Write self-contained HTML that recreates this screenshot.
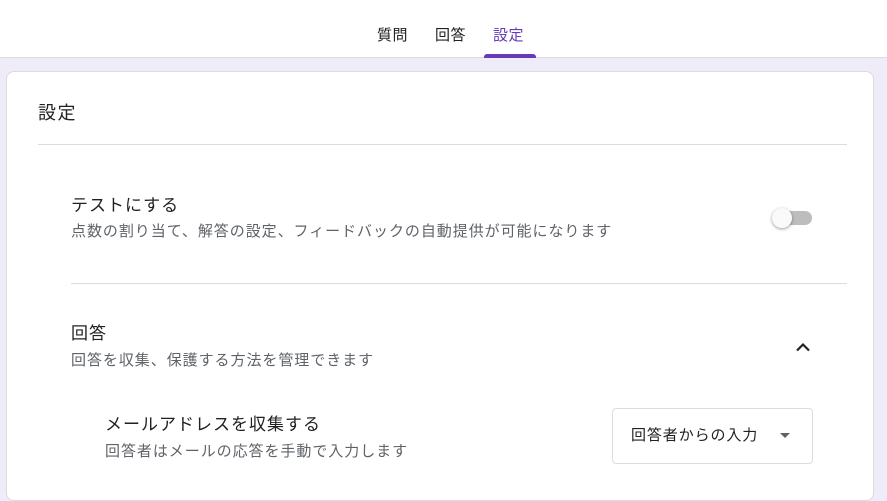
<!DOCTYPE html>
<html><head><meta charset="utf-8"><style>
*{margin:0;padding:0;box-sizing:border-box}
body{width:887px;height:482px;overflow:hidden;background:#f0ebf8;font-family:"Liberation Sans","Noto Sans CJK JP",sans-serif;position:relative;color:#202124}
.hdr{position:absolute;left:0;top:0;width:887px;height:58px;background:#fff;border-bottom:1px solid #dadce0}
.tab{position:absolute;top:26px;font-size:15px;line-height:20px;color:#202124;letter-spacing:0.5px}
.ul{position:absolute;left:484px;top:54px;width:52px;height:4px;background:#673ab7;border-radius:3px 3px 0 0}
.card{position:absolute;left:6px;top:71px;width:868px;height:430px;background:#fff;border:1px solid #dadce0;border-radius:8px}
.t{position:absolute;white-space:nowrap}
.s{font-size:15px;line-height:20px;color:#5f6368;letter-spacing:0.95px}
.h{font-size:17px;line-height:22px;letter-spacing:1px}
.line{position:absolute;height:1px;background:#dadce0}
</style></head><body>
<div class="hdr">
<div class="tab" style="left:377px">質問</div>
<div class="tab" style="left:435px">回答</div>
<div class="tab" style="left:493px;color:#673ab7">設定</div>
<div class="ul"></div>
</div>
<div class="card"></div>
<div class="t" style="left:38px;top:101px;font-size:18px;line-height:24px;letter-spacing:1.5px">設定</div>
<div class="line" style="left:38px;top:144px;width:809px"></div>
<div class="t h" style="left:71px;top:195px">テストにする</div>
<div class="t s" style="left:71px;top:222px">点数の割り当て、解答の設定、フィードバックの自動提供が可能になります</div>
<div style="position:absolute;left:776px;top:211px;width:36px;height:14px;border-radius:7px;background:#bdbdbd"></div>
<div style="position:absolute;left:772px;top:208px;width:20px;height:20px;border-radius:50%;background:#fafafa;box-shadow:0 1px 3px rgba(0,0,0,.4)"></div>
<div class="line" style="left:71px;top:283px;width:776px"></div>
<div class="t h" style="left:71px;top:323px">回答</div>
<div class="t s" style="left:71px;top:351px">回答を収集、保護する方法を管理できます</div>
<svg style="position:absolute;left:795px;top:341px" width="16" height="12" viewBox="0 0 16 12"><path d="M2 9.5L8 3.5L14 9.5" stroke="#202124" stroke-width="2.2" fill="none"/></svg>
<div class="t h" style="left:105px;top:414px">メールアドレスを収集する</div>
<div class="t s" style="left:105px;top:442px">回答者はメールの応答を手動で入力します</div>
<div style="position:absolute;left:612px;top:408px;width:201px;height:56px;border:1px solid #dadce0;border-radius:4px"></div>
<div class="t" style="left:631px;top:426px;font-size:15px;line-height:20px;letter-spacing:0.9px">回答者からの入力</div>
<svg style="position:absolute;left:780px;top:433px" width="12" height="6"><path d="M0 0H10L5 5Z" fill="#5f6368"/></svg>
</body></html>
